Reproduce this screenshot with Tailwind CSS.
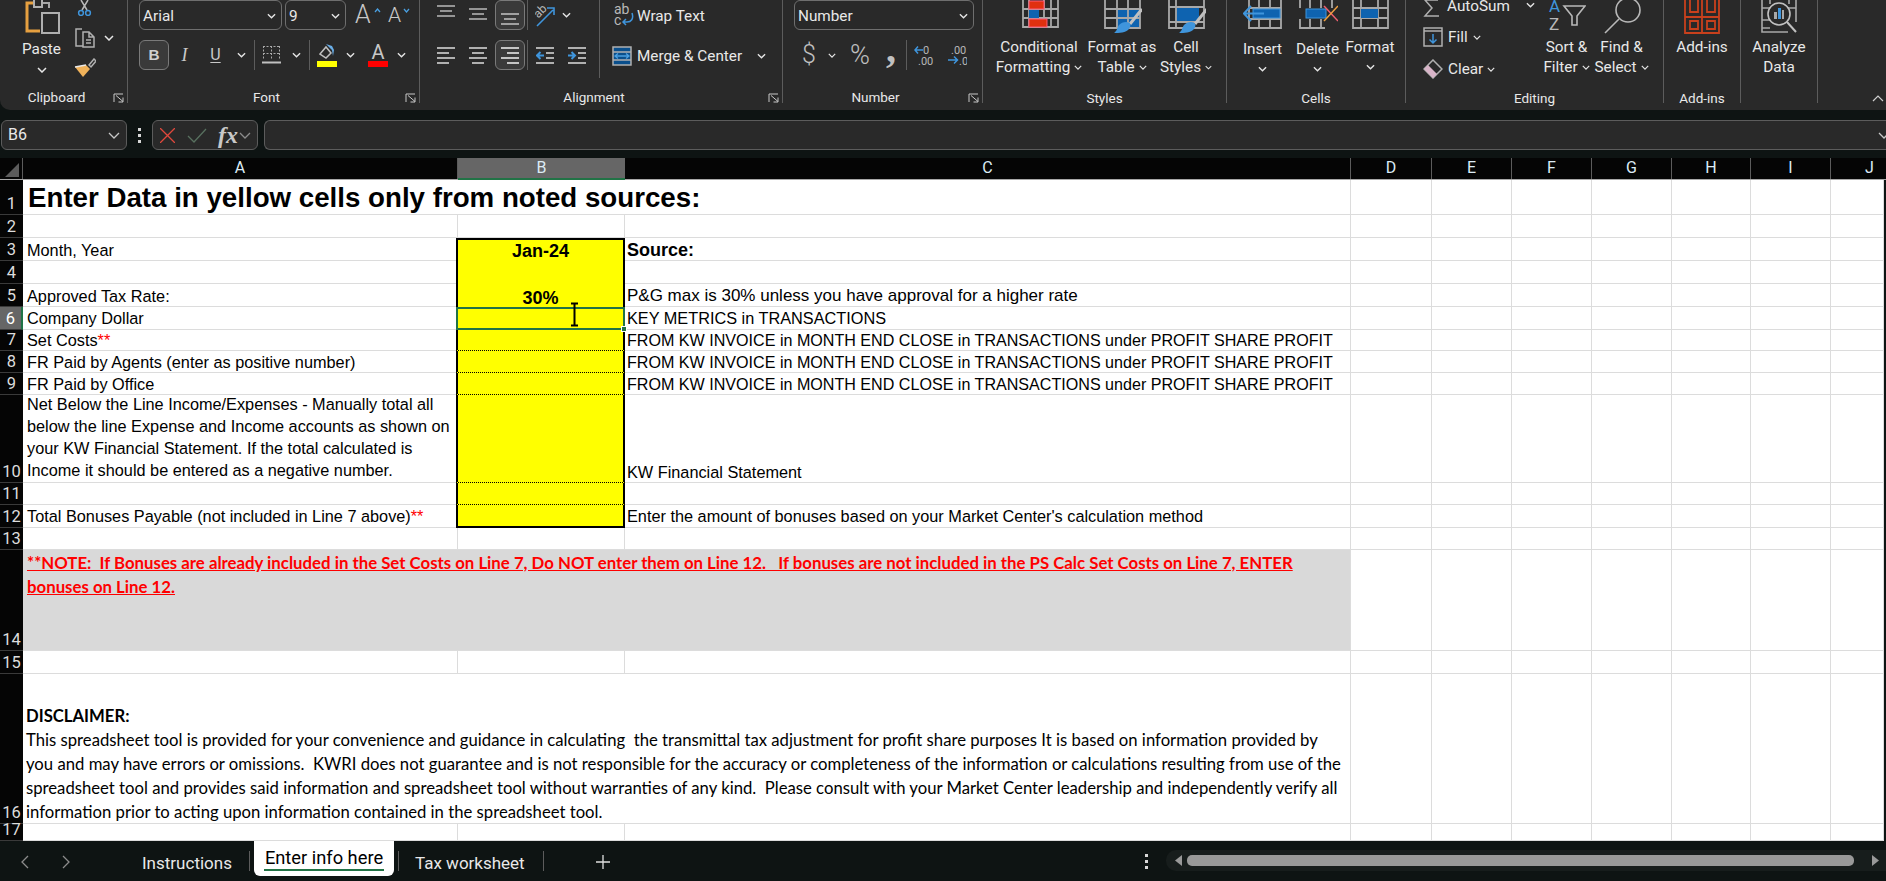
<!DOCTYPE html>
<html lang="en">
<head>
<meta charset="UTF-8">
<title>Enter info here - Excel</title>
<script src="https://cdn.jsdelivr.net/npm/@tailwindcss/browser@4"></script>
</head>
<body class="bg-[#0e1413] overflow-hidden">
<svg class="hidden">
  <symbol id="chev" viewBox="0 0 10 6"><path d="M1 1l4 4 4-4" fill="none" stroke="#e6e6e6" stroke-width="1.5"/></symbol>
  <symbol id="launch" viewBox="0 0 11 10"><path d="M1 9V1h9M3 2.5l7 6M10 4.5V9H5.5" fill="none" stroke="#c8c8c8" stroke-width="1"/></symbol>
</svg>
<div class="w-[1886px] h-[881px] flex flex-col overflow-hidden font-['Roboto',sans-serif] text-[#e8e8e8]">

  <!-- ribbon -->
  <div class="h-[110px] shrink-0 bg-[#292929] rounded-bl-[10px] flex text-[15.3px] leading-[20px] overflow-hidden">

    <!-- clipboard -->
    <div class="w-[128px] h-[103px] border-r border-[#5c5c5c] flex flex-col">
      <div class="h-[88px] flex">
        <div class="w-[74px] pl-[9px] flex flex-col items-center">
          <svg class="w-[36px] h-[36px] shrink-0" viewBox="26 0 36 36"><path d="M41 3h10v5" fill="none" stroke="#a8a8a8" stroke-width="2"/><path d="M42 31H29V3h7" fill="none" stroke="#e6a040" stroke-width="3"/><path d="M36 0v7h8V0" fill="#292929" stroke="#b0b0b0" stroke-width="2"/><rect x="44" y="13" width="17" height="20" fill="#292929" stroke="#b0b0b0" stroke-width="2"/></svg>
          <span class="mt-[3px]">Paste</span>
          <svg class="w-[10px] h-[6px] mt-[8px]"><use href="#chev"/></svg>
        </div>
        <div class="flex-1 flex flex-col">
          <div class="h-[24px]"><svg class="w-[16px] h-[16px] ml-[3px]" viewBox="0 0 16 16"><path d="M4 0l6 10M11 0L5 10" stroke="#b8b8b8" stroke-width="1.5"/><circle cx="4" cy="13" r="2.4" fill="none" stroke="#3f95dc" stroke-width="1.5"/><circle cx="11" cy="13" r="2.4" fill="none" stroke="#3f95dc" stroke-width="1.5"/></svg></div>
          <div class="h-[34px] pt-[3px] flex items-start">
            <svg class="w-[22px] h-[21px]" viewBox="0 0 22 21"><path d="M9 19H2V2h6" fill="none" stroke="#b0b0b0" stroke-width="1.5"/><path d="M9 5h6l5 5v10H9zM15 5v5h5M12 13h5M12 16h5" fill="#292929" stroke="#b0b0b0" stroke-width="1.5"/></svg>
            <svg class="w-[10px] h-[6px] ml-[8px] mt-[8px]"><use href="#chev"/></svg>
          </div>
          <svg class="w-[22px] h-[20px]" viewBox="0 0 22 20"><path d="M15 7l5-6 2 2-5 6z" fill="none" stroke="#b0b0b0" stroke-width="1.5"/><path d="M1 9l8 10 7-8-4-4z" fill="#f0b25a"/><path d="M1 9l11-2" stroke="#e8e8e8" stroke-width="1.5"/></svg>
        </div>
      </div>
      <div class="h-[15px] flex pr-[3px]"><span class="flex-1 text-center text-[13.5px] leading-[18px]">Clipboard</span><svg class="w-[11px] h-[10px] mt-[5px]"><use href="#launch"/></svg></div>
    </div>

    <!-- font -->
    <div class="w-[292px] h-[103px] border-r border-[#5c5c5c] flex flex-col">
      <div class="h-[88px] pl-[11px]">
        <div class="h-[30px] flex items-center">
          <div class="w-[143px] h-[30px] border border-[#6e6e6e] rounded-[6px] flex items-center px-[3px] pt-px"><span class="flex-1">Arial</span><svg class="w-[9px] h-[6px] mr-[2px]"><use href="#chev"/></svg></div>
          <div class="w-[61px] h-[30px] ml-[3px] border border-[#6e6e6e] rounded-[6px] flex items-center px-[3px] pt-px"><span class="flex-1">9</span><svg class="w-[9px] h-[6px] mr-[2px]"><use href="#chev"/></svg></div>
          <div class="w-[20px] ml-[9px] relative text-[25px] font-light text-[#c8c8c8]">A<svg class="absolute top-[3px] right-[-6px] w-[7px] h-[5px]" viewBox="0 0 7 5"><path d="M1 4l2.500-3 2.500 3" fill="none" stroke="#4a9fe0" stroke-width="1.300"/></svg></div>
          <div class="w-[17px] ml-[13px] relative text-[21px] font-light text-[#c8c8c8]">A<svg class="absolute top-[3px] right-[-5px] w-[7px] h-[5px]" viewBox="0 0 7 5"><path d="M1 1l2.500 3 2.500-3" fill="none" stroke="#4a9fe0" stroke-width="1.300"/></svg></div>
        </div>
        <div class="h-[30px] mt-[10px] flex items-center">
          <div class="w-[30px] h-[30px] border border-[#7a7a7a] bg-[#3a3a3a] rounded-[6px] flex items-center justify-center font-['Liberation_Sans',sans-serif] font-bold text-[#d0d0d0]">B</div>
          <div class="w-[31px] text-center font-['Liberation_Serif',serif] italic text-[18px] text-[#c8c8c8]">I</div>
          <div class="w-[31px] text-center text-[#c8c8c8] underline underline-offset-2 text-[16px]">U</div>
          <div class="w-[20px] flex justify-center"><svg class="w-[9px] h-[6px]"><use href="#chev"/></svg></div>
          <div class="w-px h-[30px] ml-[3px] bg-[#5c5c5c]"></div>
          <svg class="w-[19px] h-[20px] ml-[7px]" viewBox="0 0 19 20"><path d="M1.500 1v14M9.500 1v14M17.500 1v14M1 1.500h17M1 8.500h17" fill="none" stroke="#a8a8a8" stroke-dasharray="2 1.500"/><path d="M0 17.500h19" stroke="#c0c0c0" stroke-width="2"/></svg>
          <div class="w-[20px] ml-[5px] flex justify-center"><svg class="w-[9px] h-[6px]"><use href="#chev"/></svg></div>
          <div class="w-px h-[30px] ml-[3px] bg-[#5c5c5c]"></div>
          <svg class="w-[20px] h-[24px] ml-[7px]" viewBox="0 0 20 24"><path d="M3 11l6-7 5 6-5 5z" fill="none" stroke="#c0c0c0" stroke-width="1.500"/><path d="M9 1l6 6 1 6 1-6-2-4z" fill="#6aaee8"/><rect x="0" y="18" width="20" height="6" fill="#ffff00"/></svg>
          <div class="w-[20px] ml-[3px] flex justify-center"><svg class="w-[9px] h-[6px]"><use href="#chev"/></svg></div>
          <div class="w-[20px] ml-[8px] flex flex-col items-center text-[#c8c8c8] text-[20px] leading-[18px]">A<div class="w-[20px] h-[6px] bg-[#ff0000]"></div></div>
          <div class="w-[20px] ml-[3px] flex justify-center"><svg class="w-[9px] h-[6px]"><use href="#chev"/></svg></div>
        </div>
      </div>
      <div class="h-[15px] flex pr-[6px]"><span class="flex-1 text-center text-[13.5px] leading-[18px]">Font</span><svg class="w-[11px] h-[10px] mt-[5px] mr-[-3px]"><use href="#launch"/></svg></div>
    </div>

    <!-- alignment -->
    <div class="w-[363px] h-[103px] border-r border-[#5c5c5c] flex flex-col">
      <div class="h-[88px] flex">
        <div class="w-[180px] h-[78px] border-r border-[#5c5c5c] pl-[17px]">
          <div class="h-[30px] flex items-center">
            <svg class="w-[18px] h-[30px]" viewBox="0 0 18 30" stroke="#b8b8b8" stroke-width="1.600"><path d="M0 6h18M3 11h12M0 16h18"/></svg>
            <svg class="w-[18px] h-[30px] ml-[14px]" viewBox="0 0 18 30" stroke="#b8b8b8" stroke-width="1.600"><path d="M0 9h18M3 14h12M0 19h18"/></svg>
            <div class="w-[30px] h-[30px] ml-[8px] border border-[#7a7a7a] bg-[#3a3a3a] rounded-[6px] flex justify-center"><svg class="w-[18px] h-[28px]" viewBox="0 0 18 28" stroke="#c4c4c4" stroke-width="1.600"><path d="M0 13h18M3 18h12M0 23h18"/></svg></div>
            <div class="w-px h-[30px] ml-[2px] bg-[#5c5c5c]"></div>
            <svg class="w-[20px] h-[24px] ml-[7px]" viewBox="0 0 20 24"><text x="0" y="12" transform="rotate(-45 6 10)" font-family="Roboto" font-size="12" fill="#b8b8b8">ab</text><path d="M2 23L18 7M12 5h7v7" fill="none" stroke="#3f95dc" stroke-width="1.600"/></svg>
            <div class="w-[20px] ml-px flex justify-center"><svg class="w-[9px] h-[6px]"><use href="#chev"/></svg></div>
          </div>
          <div class="h-[30px] mt-[10px] flex items-center">
            <svg class="w-[18px] h-[18px]" viewBox="0 0 18 18" stroke="#b0b0b0" stroke-width="2"><path d="M0 2h18M0 7h12M0 12h18M0 17h12"/></svg>
            <svg class="w-[18px] h-[18px] ml-[14px]" viewBox="0 0 18 18" stroke="#b0b0b0" stroke-width="2"><path d="M0 2h18M3 7h12M0 12h18M3 17h12"/></svg>
            <div class="w-[30px] h-[30px] ml-[8px] border border-[#7a7a7a] bg-[#3a3a3a] rounded-[6px] flex items-center justify-center"><svg class="w-[18px] h-[18px]" viewBox="0 0 18 18" stroke="#c4c4c4" stroke-width="2"><path d="M0 2h18M6 7h12M0 12h18M6 17h12"/></svg></div>
            <div class="w-px h-[30px] ml-[2px] bg-[#5c5c5c]"></div>
            <svg class="w-[18px] h-[18px] ml-[8px]" viewBox="0 0 18 18"><path d="M0 2h18M10 7h8M10 12h8M0 17h18" stroke="#b0b0b0" stroke-width="2"/><path d="M8 9.500H1M4.500 6l-3.500 3.500 3.500 3.500" fill="none" stroke="#3f95dc" stroke-width="2"/></svg>
            <svg class="w-[18px] h-[18px] ml-[14px]" viewBox="0 0 18 18"><path d="M0 2h18M10 7h8M10 12h8M0 17h18" stroke="#b0b0b0" stroke-width="2"/><path d="M0 9.500h7M3.500 6l3.500 3.500-3.500 3.500" fill="none" stroke="#3f95dc" stroke-width="2"/></svg>
          </div>
        </div>
        <div class="flex-1">
          <div class="h-[30px] flex items-center pl-[14px] pt-px">
            <svg class="w-[20px] h-[28px]" viewBox="0 0 20 28"><text x="0" y="12" font-family="Roboto" font-size="14" fill="#b8b8b8">ab</text><text x="0" y="23" font-family="Roboto" font-size="14" fill="#b8b8b8">c</text><path d="M18 11c2 6-1 9-5 9H9M12 17l-3 3 3 3" fill="none" stroke="#3f95dc" stroke-width="1.500"/></svg>
            <span class="ml-[3px]">Wrap Text</span>
          </div>
          <div class="h-[30px] mt-[10px] flex items-center pl-[12px] pt-px">
            <svg class="w-[20px] h-[20px]" viewBox="0 0 20 20"><rect x="1" y="1" width="18" height="18" fill="#0a4f8c" stroke="#b0b0b0" stroke-width="1.500"/><path d="M1 6h18M1 14h18" stroke="#b0b0b0" stroke-width="1.500"/><path d="M3 10h14M6 7.500L3 10l3 2.500M14 7.500l3 2.500-3 2.500" fill="none" stroke="#4a9fe0" stroke-width="1.300"/></svg>
            <span class="ml-[5px]">Merge &amp; Center</span>
            <svg class="w-[9px] h-[6px] ml-[15px]"><use href="#chev"/></svg>
          </div>
        </div>
      </div>
      <div class="h-[15px] flex pr-[3px]"><span class="flex-1 text-center text-[13.5px] leading-[18px]">Alignment</span><svg class="w-[11px] h-[10px] mt-[5px]"><use href="#launch"/></svg></div>
    </div>

    <!-- number -->
    <div class="w-[200px] h-[103px] border-r border-[#5c5c5c] flex flex-col">
      <div class="h-[88px] pl-[11px]">
        <div class="w-[180px] h-[30px] border border-[#6e6e6e] rounded-[6px] flex items-center px-[3px] pt-px"><span class="flex-1">Number</span><svg class="w-[9px] h-[6px] mr-[2px]"><use href="#chev"/></svg></div>
        <div class="h-[30px] mt-[10px] flex items-center text-[#c0c0c0]">
          <span class="w-[12px] ml-[8px] text-[25px] font-light">$</span>
          <div class="w-[20px] ml-[8px] flex justify-center"><svg class="w-[8px] h-[5px]"><use href="#chev"/></svg></div>
          <span class="w-[22px] ml-[8px] text-[27px] font-light">%</span>
          <span class="w-[12px] ml-[14px] mt-[-12px] text-[40px] leading-[30px] font-bold font-['Liberation_Serif',serif]">,</span>
          <div class="w-px h-[30px] ml-[8px] bg-[#5c5c5c]"></div>
          <svg class="w-[20px] h-[22px] ml-[7px]" viewBox="0 0 20 22"><text x="9" y="10" font-family="Roboto" font-size="11" fill="#b8b8b8">0</text><text x="4" y="21" font-family="Roboto" font-size="11" fill="#b8b8b8">.00</text><path d="M9 6H1M4 2.500L1 6l3 3.500" fill="none" stroke="#3f95dc" stroke-width="1.500"/></svg>
          <svg class="w-[20px] h-[22px] ml-[13px]" viewBox="0 0 20 22"><text x="4" y="10" font-family="Roboto" font-size="11" fill="#b8b8b8">.00</text><text x="12" y="21" font-family="Roboto" font-size="11" fill="#b8b8b8">.0</text><path d="M1 16h9M7 12.500l3.500 3.500L7 19.500" fill="none" stroke="#3f95dc" stroke-width="1.500"/></svg>
        </div>
      </div>
      <div class="h-[15px] flex pr-[6px]"><span class="flex-1 text-center text-[13.5px] leading-[18px]">Number</span><svg class="w-[11px] h-[10px] mt-[5px] mr-[-3px]"><use href="#launch"/></svg></div>
    </div>

    <!-- styles -->
    <div class="w-[244px] h-[103px] border-r border-[#5c5c5c] flex flex-col">
      <div class="h-[88px] flex pl-[11px] text-center">
        <div class="w-[90px]">
          <svg class="w-[40px] h-[36px] mx-auto block" viewBox="1019 0 40 36"><path d="M1023-2h35v29h-35zM1029-2v29M1044-2v29M1051-2v29M1023 9h35M1023 18h35" fill="none" stroke="#a8a8a8" stroke-width="1.800"/><rect x="1029" y="1" width="15" height="8" fill="#e0300f" stroke="#ff5a78"/><rect x="1029" y="10" width="10" height="8" fill="#0e63b0"/><rect x="1029" y="19" width="18" height="8" fill="#e0300f" stroke="#ff5a78"/></svg>
          <p class="whitespace-nowrap mt-px">Conditional</p>
          <p class="whitespace-nowrap flex items-center justify-center gap-[4px]">Formatting <svg class="w-[8px] h-[5px]"><use href="#chev"/></svg></p>
        </div>
        <div class="w-[76px]">
          <svg class="w-[40px] h-[36px] mx-auto block" viewBox="1103 0 40 36"><rect x="1118" y="9" width="23" height="19" fill="#0e63b0"/><path d="M1106-2h35v30h-35zM1118-2v30M1129-2v30M1106 9h35M1106 18h35" fill="none" stroke="#a8a8a8" stroke-width="1.800"/><path d="M1143 9l-12 15" stroke="#c0c0c0" stroke-width="3"/><path d="M1127 22c4 0 6 3 3 7-3 4-10 4-15 4 3-2 3-5 5-8 2-2 4-3 7-3z" fill="#3f95dc"/></svg>
          <p class="whitespace-nowrap mt-px">Format as</p>
          <p class="whitespace-nowrap flex items-center justify-center gap-[4px]">Table <svg class="w-[8px] h-[5px]"><use href="#chev"/></svg></p>
        </div>
        <div class="w-[52px]">
          <svg class="w-[40px] h-[36px] mx-auto block" viewBox="1167 0 40 36"><rect x="1177" y="7" width="23" height="15" fill="#0e63b0"/><path d="M1170-2h35v30h-35zM1177-2v30M1170 7h35M1170 22h35" fill="none" stroke="#a8a8a8" stroke-width="1.800"/><path d="M1208 9l-12 15" stroke="#c0c0c0" stroke-width="3"/><path d="M1192 22c4 0 6 3 3 7-3 4-10 4-15 4 3-2 3-5 5-8 2-2 4-3 7-3z" fill="#3f95dc"/></svg>
          <p class="whitespace-nowrap mt-px">Cell</p>
          <p class="whitespace-nowrap flex items-center justify-center gap-[4px]">Styles <svg class="w-[8px] h-[5px]"><use href="#chev"/></svg></p>
        </div>
      </div>
      <div class="h-[15px] text-center text-[13.5px] leading-[20px]">Styles</div>
    </div>

    <!-- cells -->
    <div class="w-[179px] h-[103px] border-r border-[#5c5c5c] flex flex-col">
      <div class="h-[88px] flex pl-[8px] text-center">
        <div class="w-[55px]">
          <svg class="w-[40px] h-[36px] mx-auto block" viewBox="1243 0 40 36"><path d="M1249-2h32v30h-32zM1259-2v30M1270-2v30M1249 8h32M1249 19h32" fill="none" stroke="#a8a8a8" stroke-width="1.800"/><rect x="1253" y="9" width="27" height="9" fill="#0e63b0" stroke="#3f95dc"/><path d="M1264 13.500h-19M1251 6l-7 7.500 7 7.500" fill="none" stroke="#3f95dc" stroke-width="2"/></svg>
          <p class="mt-[3px]">Insert</p>
          <svg class="w-[9px] h-[6px] mx-auto mt-[7px]"><use href="#chev"/></svg>
        </div>
        <div class="w-[55px]">
          <svg class="w-[40px] h-[36px] mx-auto block" viewBox="1297 0 40 36"><path d="M1299-2h32v10M1299 8V-2M1299 19v9h25M1309-2v10M1320-2v10M1309 19v9M1320 19v9" fill="none" stroke="#a8a8a8" stroke-width="1.800"/><rect x="1305" y="9" width="20" height="9" fill="#0e63b0" stroke="#3f95dc"/><path d="M1323 6l14 15" stroke="#f06070" stroke-width="1.500"/><path d="M1337 6l-14 15" stroke="#f0a040" stroke-width="1.500"/></svg>
          <p class="mt-[3px]">Delete</p>
          <svg class="w-[9px] h-[6px] mx-auto mt-[7px]"><use href="#chev"/></svg>
        </div>
        <div class="w-[50px]">
          <svg class="w-[40px] h-[36px] mx-auto block" viewBox="1351 0 40 36"><path d="M1354-2h35v30h-35zM1362-2v30M1379-2v30M1354 8h35M1354 18h35" fill="none" stroke="#a8a8a8" stroke-width="1.800"/><rect x="1362" y="9" width="17" height="9" fill="#0e63b0"/></svg>
          <p class="mt-px">Format</p>
          <svg class="w-[9px] h-[6px] mx-auto mt-[7px]"><use href="#chev"/></svg>
        </div>
      </div>
      <div class="h-[15px] text-center text-[13.5px] leading-[20px]">Cells</div>
    </div>

    <!-- editing -->
    <div class="w-[258px] h-[103px] border-r border-[#5c5c5c] flex flex-col">
      <div class="h-[88px] flex">
        <div class="w-[133px] pl-[17px]">
          <div class="h-[24px] flex items-start mt-[-4px]">
            <svg class="w-[17px] h-[18px] mt-[3px]" viewBox="0 0 17 18"><path d="M15 1H2l7 8-7 8h14" fill="none" stroke="#b0b0b0" stroke-width="1.500"/></svg>
            <span class="ml-[7px]">AutoSum</span>
            <svg class="w-[9px] h-[6px] ml-[16px] mt-[6px]"><use href="#chev"/></svg>
          </div>
          <div class="h-[32px] mt-px flex items-center">
            <svg class="w-[20px] h-[20px]" viewBox="0 0 20 20"><rect x="1" y="1" width="18" height="18" fill="none" stroke="#b0b0b0" stroke-width="1.500"/><path d="M1 4h18" stroke="#b0b0b0" stroke-width="1.500"/><path d="M10 7v9M6.500 12.500l3.500 3.500 3.500-3.500" fill="none" stroke="#3f95dc" stroke-width="1.500"/></svg>
            <span class="ml-[5px]">Fill</span>
            <svg class="w-[8px] h-[5px] ml-[5px]"><use href="#chev"/></svg>
          </div>
          <div class="h-[32px] flex items-center">
            <svg class="w-[20px] h-[20px]" viewBox="0 0 20 20"><path d="M10 1l9 9-9 9-9-9z" fill="none" stroke="#b0b0b0" stroke-width="1.500"/><path d="M5 6l9 9-4 4-9-9z" fill="#d8b4c8"/></svg>
            <span class="ml-[5px]">Clear</span>
            <svg class="w-[8px] h-[5px] ml-[4px]"><use href="#chev"/></svg>
          </div>
        </div>
        <div class="w-[55px] text-center">
          <svg class="w-[38px] h-[36px] mx-auto block" viewBox="1548 0 38 36"><text x="1549" y="12" font-family="Roboto" font-size="17" fill="#3f95dc">A</text><text x="1549" y="30" font-family="Roboto" font-size="17" fill="#b8b8b8">Z</text><path d="M1564 6h21l-8 10v9h-5V16z" fill="none" stroke="#b8b8b8" stroke-width="1.600"/></svg>
          <p class="mt-px">Sort &amp;</p>
          <p class="whitespace-nowrap flex items-center justify-center gap-[4px]">Filter <svg class="w-[8px] h-[5px]"><use href="#chev"/></svg></p>
        </div>
        <div class="w-[55px] text-center">
          <svg class="w-[38px] h-[36px] mx-auto block" viewBox="1604 0 38 36"><circle cx="1629" cy="10" r="12" fill="none" stroke="#b8b8b8" stroke-width="1.600"/><path d="M1620 19l-14 14" stroke="#b8b8b8" stroke-width="1.600"/></svg>
          <p class="mt-px">Find &amp;</p>
          <p class="whitespace-nowrap flex items-center justify-center gap-[4px]">Select <svg class="w-[8px] h-[5px]"><use href="#chev"/></svg></p>
        </div>
      </div>
      <div class="h-[15px] text-center text-[13.5px] leading-[20px]">Editing</div>
    </div>

    <!-- add-ins -->
    <div class="w-[77px] h-[103px] border-r border-[#5c5c5c] flex flex-col text-center">
      <div class="h-[88px]">
        <svg class="w-[36px] h-[36px] mx-auto block" viewBox="0 0 36 36"><path d="M1-2v35h34V-2zM18-2v35M1 17h34M6-2v14h8V-2M23-2v14h8V-2M6 21h8v8H6zM23 21h8v8h-8z" fill="none" stroke="#c8401c" stroke-width="1.800"/></svg>
        <p class="mt-px">Add-ins</p>
      </div>
      <div class="h-[15px] text-[13.5px] leading-[20px]">Add-ins</div>
    </div>

    <!-- analyze -->
    <div class="w-[77px] h-[103px] border-r border-[#5c5c5c] flex flex-col text-center">
      <div class="h-[88px]">
        <svg class="w-[36px] h-[36px] mx-auto block" viewBox="0 0 36 36"><path d="M1 0v32h26M1 8h34M1 20h8M1 28h8M35 0v22M28-2v6M9-2v6" fill="none" stroke="#a8a8a8" stroke-width="1.600"/><circle cx="18" cy="14" r="11" fill="#292929" stroke="#c0c0c0" stroke-width="1.600"/><rect x="13" y="12" width="3" height="7" fill="#a8a8a8"/><rect x="17" y="8" width="3" height="11" fill="#3f95dc"/><rect x="21" y="10" width="2" height="9" fill="#a8a8a8"/><path d="M26 22l9 10" stroke="#c0c0c0" stroke-width="2"/></svg>
        <p class="mt-px">Analyze</p>
        <p>Data</p>
      </div>
    </div>

    <div class="flex-1 flex justify-end items-end pr-[2px] pb-[8px]"><svg class="w-[12px] h-[7px]" viewBox="0 0 12 7"><path d="M1 6l5-5 5 5" fill="none" stroke="#d0d0d0" stroke-width="1.200"/></svg></div>
  </div>

  <!-- formula bar -->
  <div class="h-[48px] shrink-0 flex pt-[10px] pl-px text-[16px]">
    <div class="w-[126px] h-[30px] bg-[#292929] border border-[#5c5c5c] rounded-[6px] flex items-center pl-[6px] pr-[6px]"><span class="flex-1">B6</span><svg class="w-[12px] h-[7px]" viewBox="0 0 12 7"><path d="M1 1l5 5 5-5" fill="none" stroke="#c8c8c8" stroke-width="1.300"/></svg></div>
    <div class="w-[25px] h-[30px] flex flex-col items-center justify-center gap-[3px]"><i class="w-[3px] h-[3px] bg-[#d8d8d8]"></i><i class="w-[3px] h-[3px] bg-[#d8d8d8]"></i><i class="w-[3px] h-[3px] bg-[#d8d8d8]"></i></div>
    <div class="w-[106px] h-[30px] bg-[#292929] border border-[#5c5c5c] rounded-[6px] flex items-center">
      <svg class="w-[15px] h-[15px] ml-[7px]" viewBox="0 0 15 15"><path d="M0 0l15 15M15 0L0 15" stroke="#e0483c" stroke-width="1.300"/></svg>
      <svg class="w-[20px] h-[15px] ml-[12px]" viewBox="0 0 20 15"><path d="M1 8l6 6L19 1" fill="none" stroke="#58705f" stroke-width="1.300"/></svg>
      <span class="ml-[11px] font-['Liberation_Serif',serif] italic font-bold text-[24px] text-[#c8c8c8]">fx</span>
      <svg class="w-[12px] h-[7px] ml-[1px]" viewBox="0 0 12 7"><path d="M1 1l5 5 5-5" fill="none" stroke="#8c8c8c" stroke-width="1.300"/></svg>
    </div>
    <div class="flex-1 h-[30px] ml-[6px] bg-[#292929] border border-[#5c5c5c] border-r-0 rounded-l-[6px] flex items-center justify-end"><svg class="w-[8px] h-[7px] mr-0" viewBox="0 0 8 7"><path d="M1 1l5 5 5-5" fill="none" stroke="#c8c8c8" stroke-width="1.300"/></svg></div>
  </div>

  <!-- column headers -->
  <div class="h-[22px] shrink-0 bg-[#050505] flex text-[16px] leading-[20px] text-center text-[#dcebf5] border-b border-[#a8a8a8]">
    <div class="w-[23px] border-r border-[#5c5c5c] relative"><svg class="absolute right-[3px] bottom-[2px] w-[14px] h-[14px]" viewBox="0 0 14 14"><path d="M14 0v14H0z" fill="#5c5c5c"/></svg></div>
    <div class="w-[435px] border-r border-[#5c5c5c]">A</div>
    <div class="w-[167px] bg-[#666666] border-b-2 border-[#217346] h-[22px]">B</div>
    <div class="w-[726px] border-r border-[#5c5c5c]">C</div>
    <div class="w-[81px] border-r border-[#5c5c5c]">D</div>
    <div class="w-[80px] border-r border-[#5c5c5c]">E</div>
    <div class="w-[80px] border-r border-[#5c5c5c]">F</div>
    <div class="w-[80px] border-r border-[#5c5c5c]">G</div>
    <div class="w-[79px] border-r border-[#5c5c5c]">H</div>
    <div class="w-[80px] border-r border-[#5c5c5c]">I</div>
    <div class="flex-1 text-left pl-[34px]">J</div>
  </div>

  <!-- sheet -->
  <div class="relative h-[661px] shrink-0 pr-[2px]">
    <div id="sheet" class="grid bg-white text-black h-[661px] grid-cols-[23px_435px_167px_726px_81px_80px_80px_80px_79px_80px_53px] grid-rows-[35px_23px_23px_23px_23px_23px_21px_22px_22px_88px_22px_23px_22px_101px_23px_150px_17px] font-['Liberation_Sans',sans-serif] text-[16.3px] leading-[18px]"></div>
    <!-- active cell handle and text cursor -->
    <div class="absolute left-[621px] top-[146px] w-[6px] h-[6px] bg-[#217346] border border-white"></div>
    <svg class="absolute left-[569px] top-[122px] w-[11px] h-[25px]" viewBox="0 0 11 25"><path d="M2 1.500h7M2 23.500h7M5.500 1.500v22" fill="none" stroke="#000" stroke-width="2"/></svg>
  </div>

  <!-- sheet tabs -->
  <div class="flex-1 flex items-start text-[17px]">
    <svg class="w-[8px] h-[14px] ml-[21px] mt-[14px]" viewBox="0 0 8 14"><path d="M7 1L1 7l6 6" fill="none" stroke="#8c8c8c" stroke-width="1.300"/></svg>
    <svg class="w-[8px] h-[14px] ml-[33px] mt-[14px]" viewBox="0 0 8 14"><path d="M1 1l6 6-6 6" fill="none" stroke="#8c8c8c" stroke-width="1.300"/></svg>
    <span class="ml-[72px] mt-[10px] w-[90px] whitespace-nowrap">Instructions</span>
    <div class="w-px h-[20px] ml-[17px] mt-[10px] bg-[#5c5c5c]"></div>
    <div class="w-[140px] h-[35px] ml-[4px] bg-white rounded-b-[6px] text-black text-[18.300px] pt-[6px] text-center leading-[22px]"><span class="inline-block border-b-2 border-[#217346] px-[1px]">Enter info here</span></div>
    <div class="w-px h-[20px] ml-[4px] mt-[10px] bg-[#5c5c5c]"></div>
    <span class="ml-[16px] mt-[10px] w-[110px] whitespace-nowrap">Tax worksheet</span>
    <div class="w-px h-[20px] ml-[18px] mt-[10px] bg-[#5c5c5c]"></div>
    <svg class="w-[14px] h-[14px] ml-[52px] mt-[14px]" viewBox="0 0 14 14"><path d="M7 0v14M0 7h14" stroke="#e0e0e0" stroke-width="1.300"/></svg>
    <div class="ml-[535px] mt-[13px] w-[3px] h-[15px] flex flex-col gap-[3px]"><i class="h-[3px] bg-[#d8d8d8]"></i><i class="h-[3px] bg-[#d8d8d8]"></i><i class="h-[3px] bg-[#d8d8d8]"></i></div>
    <div class="ml-[18px] mt-[9px] flex-1 h-[21px] bg-[#171d1c] rounded-l-[10px] flex items-center pl-[9px]">
      <svg class="w-[7px] h-[11px]" viewBox="0 0 7 11"><path d="M7 0v11L0 5.500z" fill="#999999"/></svg>
      <div class="w-[667px] h-[11px] ml-[5px] bg-[#999999] rounded-[5px]"></div>
      <svg class="w-[7px] h-[11px] ml-[18px]" viewBox="0 0 7 11"><path d="M0 0v11l7-5.500z" fill="#999999"/></svg>
    </div>
  </div>
</div>

<script>
  // rows of the sheet: a/b/c are the cells, merged is one cell across A to C
  const red = t => `<span class="text-[#ff0000]">${t}</span>`;
  const from = `<span class="text-[16.100px]">FROM KW INVOICE in MONTH END CLOSE in TRANSACTIONS under PROFIT SHARE PROFIT</span>`;
  const rows = [
    { merged: `<span class="pl-[5px] pt-px text-[27.700px] leading-[30px] font-bold whitespace-nowrap">Enter Data in yellow cells only from noted sources:</span>`, box: 'items-center' },
    {},
    { a: 'Month, Year', b: 'Jan-24', c: `<b class="text-[18px]">Source:</b>`, y: 'top' },
    { y: 'mid' },
    { a: 'Approved Tax Rate:', b: '30%', c: `<span class="text-[17px]">P&amp;G max is 30% unless you have approval for a higher rate</span>`, y: 'mid' },
    { a: 'Company Dollar', c: 'KEY METRICS in TRANSACTIONS', y: 'active', up: true },
    { a: 'Set Costs' + red('**'), c: from, y: 'dot' },
    { a: 'FR Paid by Agents (enter as positive number)', c: from, y: 'dot' },
    { a: 'FR Paid by Office', c: from, y: 'dot' },
    { a: 'Net Below the Line Income/Expenses - Manually total all<br>below the line Expense and Income accounts as shown on<br>your KW Financial Statement. If the total calculated is<br>Income it should be entered as a negative number.', c: 'KW Financial Statement', y: 'dot', lh: true },
    { y: 'dot' },
    { a: 'Total Bonuses Payable (not included in Line 7 above)' + red('**'), c: "Enter the amount of bonuses based on your Market Center's calculation method", y: 'end', up: true },
    {},
    { merged: `<div class="pl-[4px] pt-px font-['Lato',sans-serif] font-bold text-[16.800px] leading-[24px] text-[#ff0000] underline whitespace-pre">**NOTE:  If Bonuses are already included in the Set Costs on Line 7, Do NOT enter them on Line 12.   If bonuses are not included in the PS Calc Set Costs on Line 7, ENTER<br>bonuses on Line 12.</div>`, box: 'bg-[#d9d9d9] items-start' },
    {},
    { merged: `<div class="pl-[3px] mb-[-1px] font-['Lato',sans-serif] text-[16.700px] leading-[24px] whitespace-pre"><b>DISCLAIMER:</b><br>This spreadsheet tool is provided for your convenience and guidance in calculating  the transmittal tax adjustment for profit share purposes It is based on information provided by<br>you and may have errors or omissions.  KWRI does not guarantee and is not responsible for the accuracy or completeness of the information or calculations resulting from use of the<br>spreadsheet tool and provides said information and spreadsheet tool without warranties of any kind.  Please consult with your Market Center leadership and independently verify all<br>information prior to acting upon information contained in the spreadsheet tool.</div>`, box: 'items-end' },
    {},
  ];

  const line = 'border-b border-r border-[#dcdcdc]';
  const yellow = {
    top: 'bg-[#ffff00] ml-[-2px] border-x-2 border-t-2 border-black font-bold text-[18px] text-center justify-center items-center',
    mid: 'bg-[#ffff00] ml-[-2px] border-x-2 border-black font-bold text-[18px] text-center justify-center items-end',
    active: 'bg-[#ffff00] ml-[-2px] border-2 border-[#217346]',
    dot: 'bg-[#ffff00] ml-[-2px] border-x-2 border-black border-b border-b-black [border-bottom-style:dotted]',
    end: 'bg-[#ffff00] ml-[-2px] border-x-2 border-b-2 border-black',
  };

  let html = '';
  rows.forEach((r, i) => {
    const on = i === 5;
    html += `<div class="flex items-end justify-center whitespace-nowrap font-['Roboto',sans-serif] text-[16.500px] leading-[20px] border-b border-b-[#3a3a3a] ${on ? 'bg-[#666666] text-white border-r-2 border-r-[#217346]' : 'bg-[#050505] text-[#dddddd]'}">${i + 1}</div>`;
    if (r.merged) {
      html += `<div class="col-span-3 flex ${r.box} ${line}">${r.merged}</div>`;
    } else {
      const lh = r.lh ? 'leading-[22px]' : '';
      const pad = r.up ? 'pb-[2px]' : 'pb-px';
      html += `<div class="flex items-end pl-[4px] whitespace-nowrap ${pad} ${lh} ${line}"><span>${r.a || ''}</span></div>`;
      html += `<div class="flex ${r.y ? yellow[r.y] : line}">${r.b || ''}</div>`;
      html += `<div class="flex items-end pl-[2px] whitespace-nowrap ${pad} ${line}"><span>${r.c || ''}</span></div>`;
    }
    for (let c = 0; c < 7; c++) html += `<div class="${line}"></div>`;
  });
  document.getElementById('sheet').innerHTML = html;
</script>
</body>
</html>
